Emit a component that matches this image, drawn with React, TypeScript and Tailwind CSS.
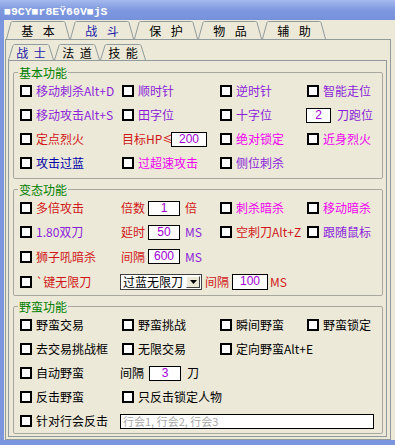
import React from 'react';

type Tone = 'purple' | 'red' | 'magenta' | 'blue' | 'black';

const toneClass: Record<Tone, string> = {
  purple: 'text-[#8b1fd8]',
  red: 'text-[#d01818]',
  magenta: 'text-[#f000f0]',
  blue: 'text-[#0000a8]',
  black: 'text-black',
};

// trapezoid tab, drawn behind its label
function Tab({ label, width, height, active, size }: { label: string; width: number; height: number; active?: boolean; size: string }) {
  const top = height === 19 ? 1.5 : 2.5;
  const d = `M0.5 ${height} L5 ${top + 1} Q5.5 ${top} 6.5 ${top} L${width - 6.5} ${top} Q${width - 5.5} ${top} ${width - 5} ${top + 1} L${width - 0.5} ${height}`;
  return (
    <div className={`relative flex items-center justify-center ${size} ${active ? 'text-[#1a1aa8]' : 'text-black'}`}>
      <svg className="absolute inset-0" width={width} height={height}>
        <path d={d} fill="none" stroke="#919b9c" strokeWidth="1" />
      </svg>
      <span className="relative">{label}</span>
    </div>
  );
}

function Box() {
  return <span className="w-[12px] h-[12px] border-2 border-black bg-white shrink-0" />;
}

function Check({ label, tone = 'black' }: { label: string; tone?: Tone }) {
  return (
    <div className="flex items-center gap-[4px] whitespace-nowrap">
      <Box />
      <span className={toneClass[tone]}>{label}</span>
    </div>
  );
}

function Field({ value, className }: { value: string; className: string }) {
  return (
    <div
      className={`h-[15px] border border-black bg-white flex items-center justify-center text-[#a000d0] font-['Liberation_Sans',sans-serif] text-[12px] leading-[13px] shrink-0 ${className}`}
    >
      {value}
    </div>
  );
}

const rowCls = 'grid grid-cols-[102px_98px_87px_1fr] items-center';

export default function App() {
  return (
    <div className="w-[395px] h-[445px] bg-[#ece9d8] flex flex-col overflow-hidden font-['Noto_Sans_CJK_SC','Noto_Sans',sans-serif] text-[12px] leading-[14px]">
      {/* Title bar */}
      <div className="h-[20px] shrink-0 bg-gradient-to-b from-[#a6baee] via-[#7f98df] to-[#7691dc] pl-[4px] pt-[4px] flex items-center">
        <span className="text-white font-bold font-['Liberation_Mono','DejaVu_Sans_Mono',monospace] text-[11.5px] leading-[14px]">
          ■9CY■r8EŸ60V■jS
        </span>
      </div>

      <div className="flex-1 flex flex-col border-l-4 border-b-[5px] border-[#7b96df] pl-[1px]">
        {/* Main tabs */}
        <div className="h-[19px] flex pl-[1px] shrink-0">
          <Tab label="基 本" width={64} height={19} size="w-[64px] h-[19px] pt-[2px] [word-spacing:7px]" />
          <Tab label="战 斗" width={64} height={19} size="w-[64px] h-[19px] pt-[2px] [word-spacing:7px]" active />
          <Tab label="保 护" width={64} height={19} size="w-[64px] h-[19px] pt-[2px] [word-spacing:7px]" />
          <Tab label="物 品" width={64} height={19} size="w-[64px] h-[19px] pt-[2px] [word-spacing:7px]" />
          <Tab label="辅 助" width={64} height={19} size="w-[64px] h-[19px] pt-[2px] [word-spacing:7px]" />
        </div>

        {/* Outer tab panel */}
        <div className="w-[386px] border border-[#919b9c] pl-[2px] pr-[3px] pt-[2px] pb-[2px] flex flex-col">
          <div className="h-[18px] flex shrink-0">
            <Tab label="战 士" width={46} height={18} size="w-[46px] h-[18px] pt-[3px] [word-spacing:3px]" active />
            <Tab label="法 道" width={46} height={18} size="w-[46px] h-[18px] pt-[3px] [word-spacing:3px]" />
            <Tab label="技 能" width={46} height={18} size="w-[46px] h-[18px] pt-[3px] [word-spacing:3px]" />
          </div>

          {/* Inner tab panel */}
          <div className="border border-[#919b9c] pl-[4px] pr-[3px] pb-[2px] flex flex-col">
            {/* 基本功能 */}
            <fieldset className="mt-[5px] border border-[#a8a8a0] rounded-[2px] pl-[6px] pr-[3px] pb-[3px] min-w-0">
              <legend className="-ml-[2px] px-[1px] leading-[13px] text-[#008000]">基本功能</legend>
              <div className={`${rowCls} h-[24px]`}>
                <Check label="移动刺杀Alt+D" tone="purple" />
                <Check label="顺时针" tone="purple" />
                <Check label="逆时针" tone="purple" />
                <Check label="智能走位" tone="purple" />
              </div>
              <div className={`${rowCls} h-[24px]`}>
                <Check label="移动攻击Alt+S" tone="purple" />
                <Check label="田字位" tone="purple" />
                <Check label="十字位" tone="purple" />
                <div className="flex items-center -ml-[1px]">
                  <Field value="2" className="w-[25px]" />
                  <span className="ml-[6px] text-[#8b1fd8] whitespace-nowrap">刀跑位</span>
                </div>
              </div>
              <div className={`${rowCls} h-[24px]`}>
                <Check label="定点烈火" tone="red" />
                <div className="flex items-center">
                  <span className="w-[49px] text-[#d01818] whitespace-nowrap">目标HP≤</span>
                  <Field value="200" className="w-[36px]" />
                </div>
                <Check label="绝对锁定" tone="magenta" />
                <Check label="近身烈火" tone="magenta" />
              </div>
              <div className={`${rowCls} h-[24px]`}>
                <Check label="攻击过蓝" tone="blue" />
                <Check label="过超速攻击" tone="magenta" />
                <Check label="侧位刺杀" tone="purple" />
                <div />
              </div>
            </fieldset>

            {/* 变态功能 */}
            <fieldset className="mt-[4px] border border-[#a8a8a0] rounded-[2px] pl-[6px] pr-[3px] pb-[1px] min-w-0">
              <legend className="-ml-[2px] px-[1px] leading-[13px] text-[#008000]">变态功能</legend>
              <div className={`${rowCls} h-[24px]`}>
                <Check label="多倍攻击" tone="red" />
                <div className="flex items-center -ml-[1px]">
                  <span className="w-[27px] text-[#d01818]">倍数</span>
                  <Field value="1" className="w-[32px]" />
                  <span className="ml-[5px] text-[#d01818]">倍</span>
                </div>
                <Check label="刺杀暗杀" tone="magenta" />
                <Check label="移动暗杀" tone="magenta" />
              </div>
              <div className={`${rowCls} h-[24px]`}>
                <Check label="1.80双刀" tone="purple" />
                <div className="flex items-center -ml-[1px]">
                  <span className="w-[27px] text-[#d01818]">延时</span>
                  <Field value="50" className="w-[32px]" />
                  <span className="ml-[5px] text-[#8b1fd8]">MS</span>
                </div>
                <Check label="空刺刀Alt+Z" tone="red" />
                <Check label="跟随鼠标" tone="purple" />
              </div>
              <div className={`${rowCls} h-[25px]`}>
                <Check label="狮子吼暗杀" tone="red" />
                <div className="flex items-center -ml-[1px]">
                  <span className="w-[27px] text-[#d01818]">间隔</span>
                  <Field value="600" className="w-[32px]" />
                  <span className="ml-[5px] text-[#8b1fd8]">MS</span>
                </div>
                <div />
                <div />
              </div>
              <div className={`${rowCls} h-[25px]`}>
                <Check label="`键无限刀" tone="red" />
                <div className="col-span-3 flex items-center">
                  <div className="-ml-[2px] w-[82px] h-[16px] border border-[#404040] bg-white flex items-center justify-between pl-[2px] pr-[1px]">
                    <span className="text-black whitespace-nowrap">过蓝无限刀</span>
                    <span className="w-[14px] h-[12px] bg-[#ece9d8] border border-t-white border-l-white border-r-[#404040] border-b-[#404040] flex items-center justify-center">
                      <svg width="7" height="4" viewBox="0 0 7 4">
                        <path d="M0 0h7L3.5 4z" fill="#000" />
                      </svg>
                    </span>
                  </div>
                  <span className="ml-[3px] text-[#d01818]">间隔</span>
                  <Field value="100" className="ml-[3px] w-[36px] h-[16px]" />
                  <span className="ml-[2px] text-[#d01818]">MS</span>
                </div>
              </div>
            </fieldset>

            {/* 野蛮功能 */}
            <fieldset className="mt-[4px] border border-[#a8a8a0] rounded-[2px] pl-[6px] pr-[3px] min-w-0">
              <legend className="-ml-[2px] px-[1px] leading-[13px] text-[#008000]">野蛮功能</legend>
              <div className={`${rowCls} h-[24px]`}>
                <Check label="野蛮交易" />
                <Check label="野蛮挑战" />
                <Check label="瞬间野蛮" />
                <Check label="野蛮锁定" />
              </div>
              <div className={`${rowCls} h-[24px]`}>
                <Check label="去交易挑战框" />
                <Check label="无限交易" />
                <Check label="定向野蛮Alt+E" />
                <div />
              </div>
              <div className={`${rowCls} h-[24px]`}>
                <Check label="自动野蛮" />
                <div className="col-span-3 flex items-center -ml-[2px]">
                  <span className="w-[29px]">间隔</span>
                  <Field value="3" className="w-[32px]" />
                  <span className="ml-[6px]">刀</span>
                </div>
              </div>
              <div className={`${rowCls} h-[24px]`}>
                <Check label="反击野蛮" />
                <div className="col-span-3">
                  <Check label="只反击锁定人物" />
                </div>
              </div>
              <div className={`${rowCls} h-[24px]`}>
                <Check label="针对行会反击" />
                <div className="col-span-3 flex items-center -ml-[2px]">
                  <div className="w-[254px] h-[15px] border border-black bg-white pl-[2px] flex items-center text-[11px] leading-[13px] text-[#a8a8a8] whitespace-nowrap">
                    行会1, 行会2, 行会3
                  </div>
                </div>
              </div>
            </fieldset>
          </div>
        </div>
      </div>
    </div>
  );
}
